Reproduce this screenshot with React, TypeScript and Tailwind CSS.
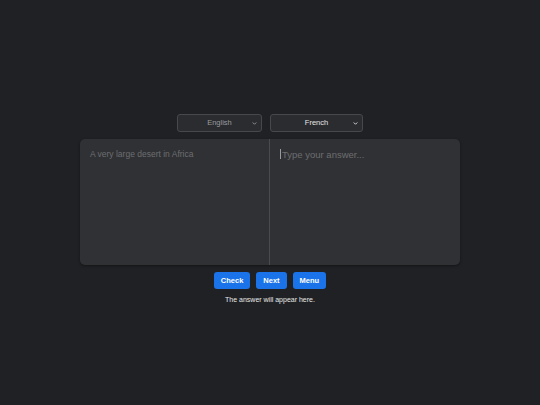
const buttons = ["Check", "Next", "Menu"];

function Chevron() {
  return (
    <svg width="5" height="5" viewBox="0 0 10 10" className="absolute right-[4px] top-[6px]">
      <path d="M2 3.5 L5 6.5 L8 3.5" fill="none" stroke="currentColor" strokeWidth="1.8" strokeLinecap="round" />
    </svg>
  );
}

function LangSelect({ label, width, dim }: { label: string; width: string; dim?: boolean }) {
  return (
    <div
      className={`relative h-[18px] ${width} rounded-[3px] border border-[#47484c] bg-[#2b2c30] text-center text-[7.5px] leading-[16px] ${
        dim ? "text-[#9a9b9e]" : "text-[#e6e6e6]"
      }`}
    >
      {label}
      <Chevron />
    </div>
  );
}

export default function App() {
  return (
    <main
      className="flex h-[405px] w-[540px] flex-col items-center bg-[#202124] pt-[114px]"
      style={{ fontFamily: '"Liberation Sans", Arial, sans-serif' }}
    >
      <div className="flex gap-[8px]">
        <LangSelect label="English" width="w-[85px]" dim />
        <LangSelect label="French" width="w-[93px]" />
      </div>

      <div className="mt-[7px] grid h-[126px] w-[380px] grid-cols-2 overflow-hidden rounded-[5px] bg-[#303134] shadow-[0_1px_3px_rgba(0,0,0,0.4)]">
        <div className="border-r border-[#4a4b4f] px-[10px] pt-[9px] text-[8.5px] text-[#6d6e71]">
          A very large desert in Africa
        </div>
        <div className="flex items-start px-[10px] pt-[9px] text-[9.5px] text-[#6d6e71]">
          <span className="mr-[1px] mt-[1px] h-[10px] w-px bg-[#9a9b9e]" />
          Type your answer...
        </div>
      </div>

      <div className="mt-[7px] flex gap-[6px]">
        {buttons.map((b) => (
          <button
            key={b}
            className="h-[17px] rounded-[3px] bg-[#1a73e8] px-[7px] text-[7.5px] font-bold text-white"
          >
            {b}
          </button>
        ))}
      </div>

      <p className="mt-[6px] text-[7px] text-[#e8e8e8]">The answer will appear here.</p>
    </main>
  );
}
